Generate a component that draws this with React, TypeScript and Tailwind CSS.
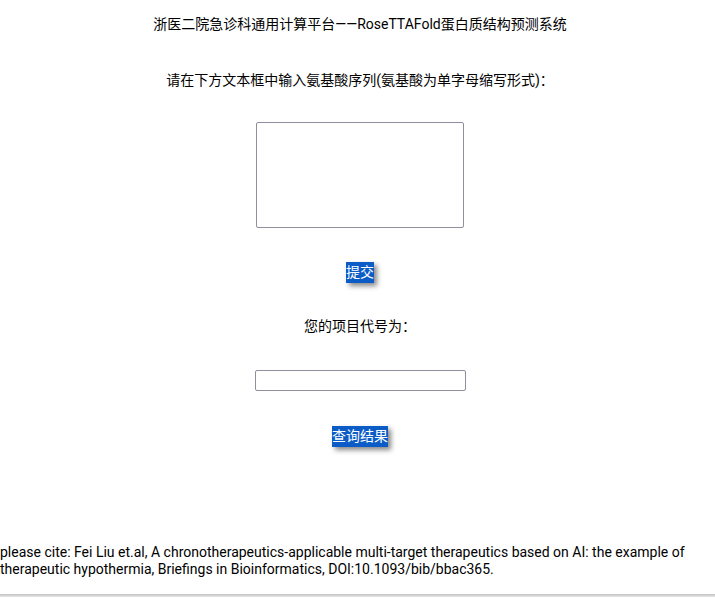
import React from "react";

const App: React.FC = () => {
  return (
    <div className="w-[715px] h-[598px] overflow-hidden bg-white">
      <div
        className="w-[720px] h-[598px] text-[14px] text-black flex flex-col"
        style={{ fontFamily: 'Roboto, "Noto Sans CJK SC", sans-serif' }}
      >
        <p className="mt-[15px] text-center leading-[18px]">
          浙医二院急诊科通用计算平台——RoseTTAFold蛋白质结构预测系统
        </p>
        <p className="mt-[38px] text-center leading-[18px]">
          请在下方文本框中输入氨基酸序列(氨基酸为单字母缩写形式)：
        </p>
        <div className="mt-[33px] flex justify-center">
          <textarea className="w-[208px] h-[106px] border border-[#8f8f9d] rounded-[2px] resize-none outline-none" />
        </div>
        <div className="mt-[34px] flex justify-center">
          <button className="bg-[#0b5cc6] text-white leading-[21px] h-[21px] px-0 shadow-[3px_3px_5px_#888]">
            提交
          </button>
        </div>
        <p className="mt-[34px] text-center leading-[18px]">您的项目代号为：</p>
        <div className="mt-[35px] flex justify-center">
          <input className="w-[211px] h-[21px] border border-[#8f8f9d] rounded-[2px] outline-none" />
        </div>
        <div className="mt-[35px] flex justify-center">
          <button className="bg-[#0b5cc6] text-white leading-[21px] h-[21px] px-0 shadow-[3px_3px_5px_#888]">
            查询结果
          </button>
        </div>
        <div className="mt-auto w-[715px]">
          <p className="leading-[17px]">
            please cite: Fei Liu et.al, A chronotherapeutics-applicable multi-target therapeutics based on AI: the example of
            therapeutic hypothermia, Briefings in Bioinformatics, DOI:10.1093/bib/bbac365.
          </p>
          <div className="mt-[16px] mb-[1px] h-[3px] bg-gradient-to-b from-[#c2c2c2] to-[#e6e6e6]" />
        </div>
      </div>
    </div>
  );
};

export default App;
